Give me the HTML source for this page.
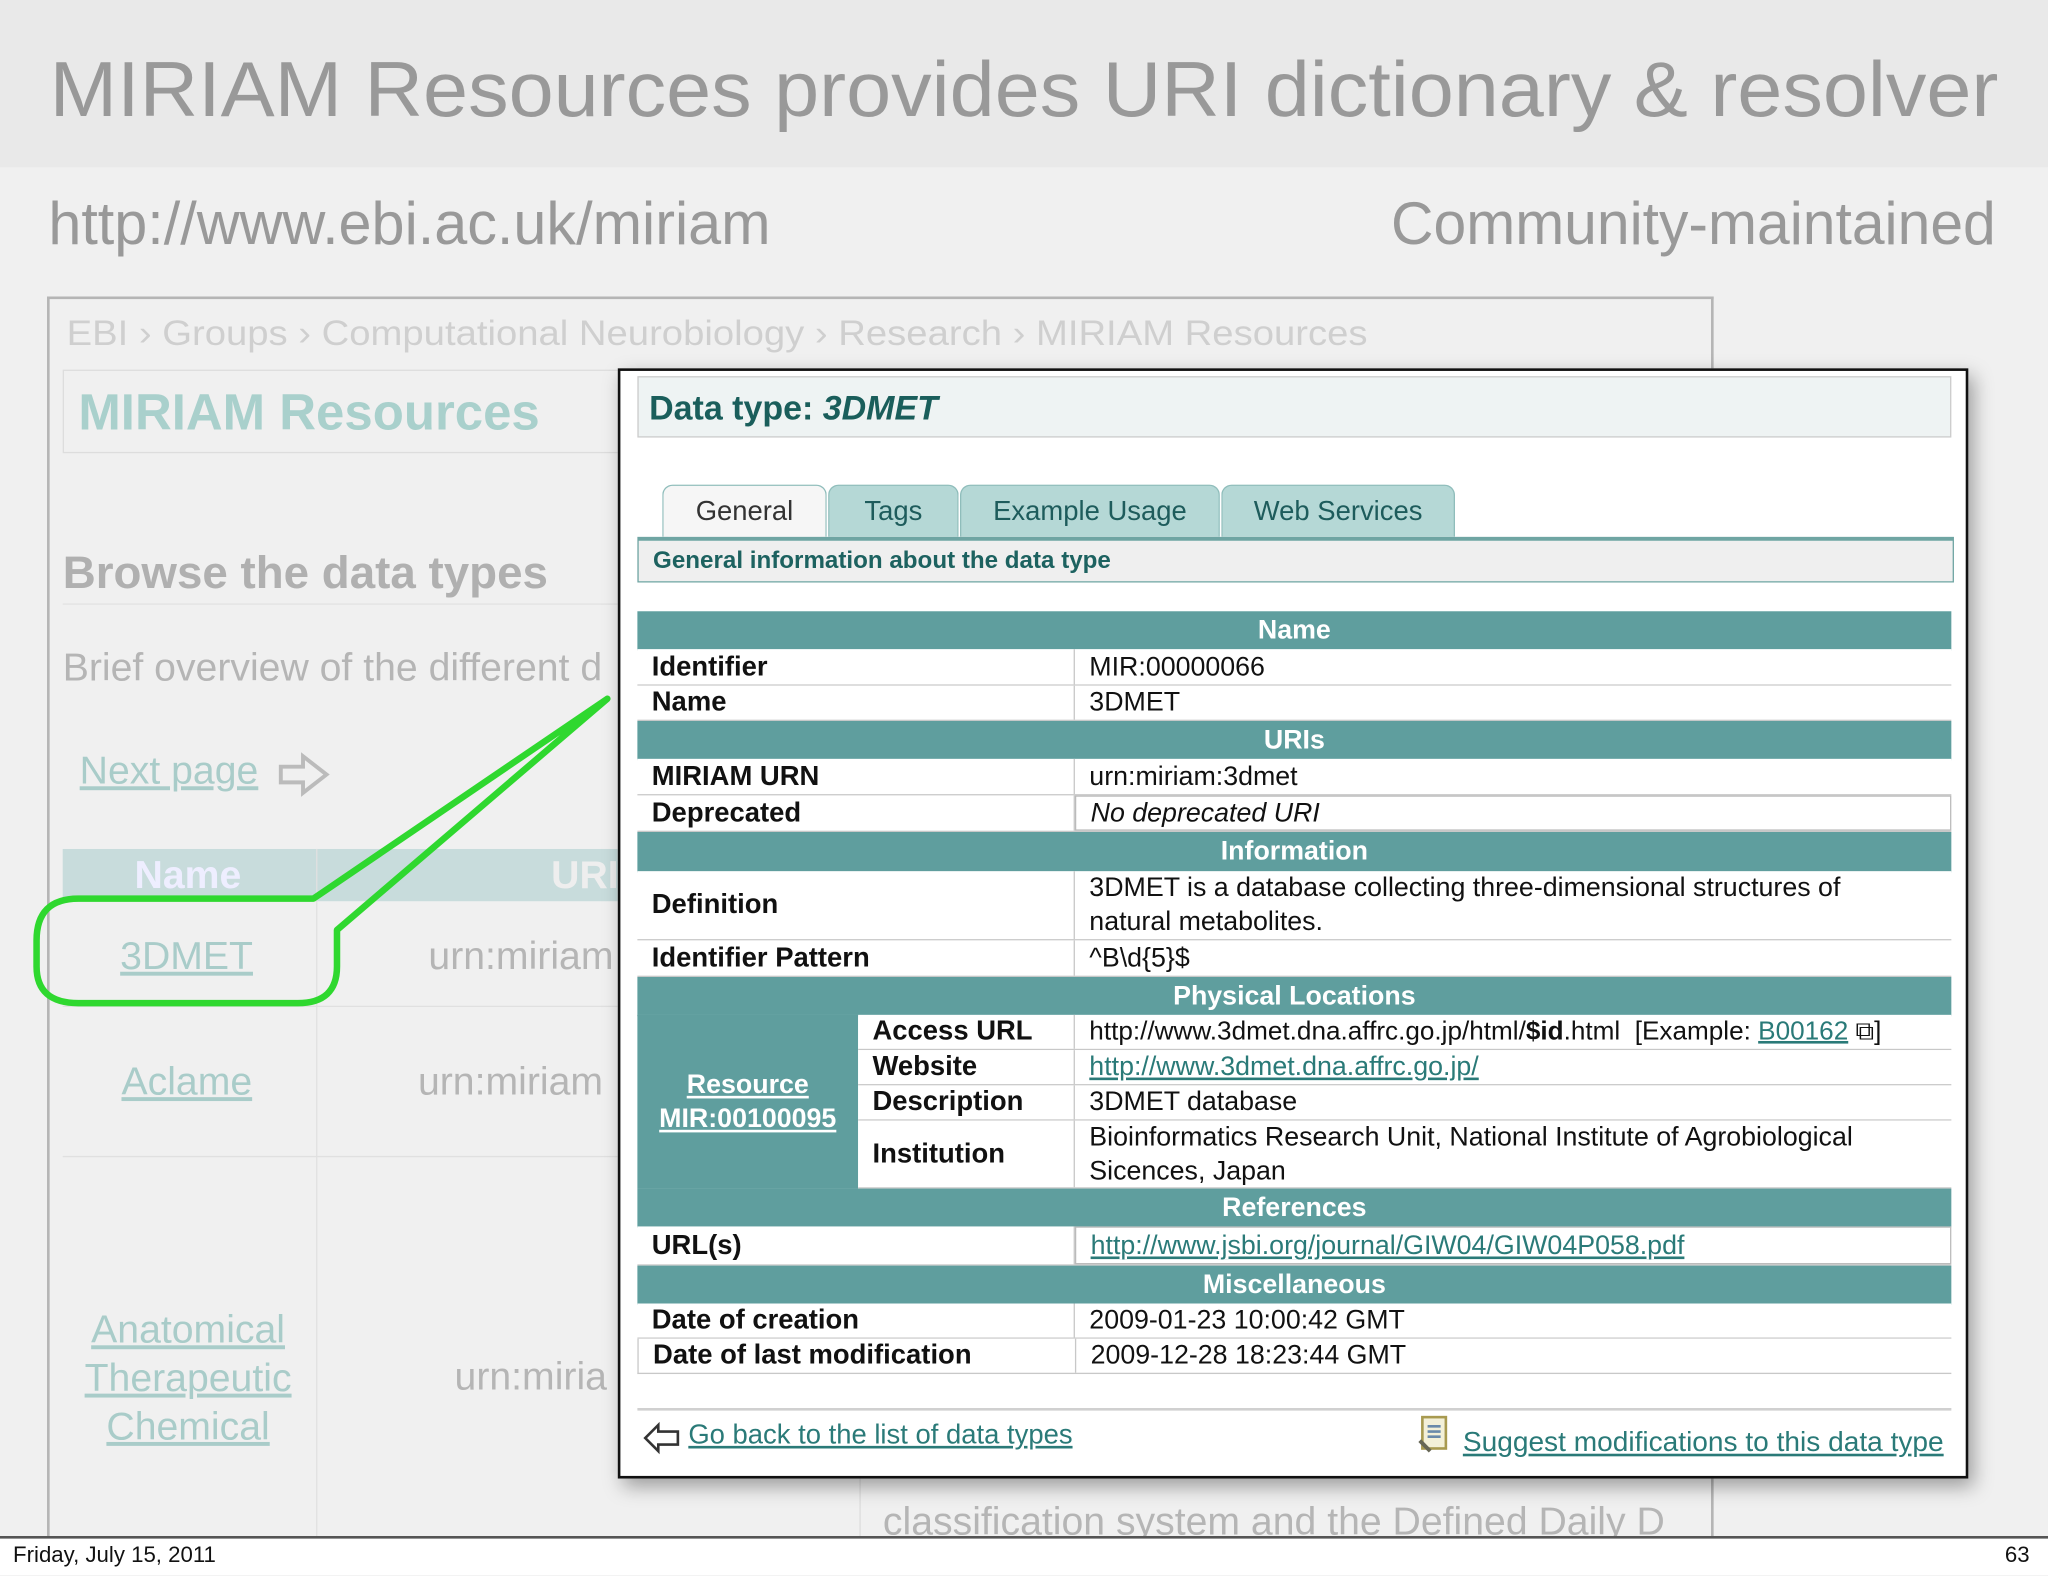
<!DOCTYPE html>
<html><head><meta charset="utf-8"><style>
html,body{margin:0;padding:0;background:#f0f0f0;overflow:hidden}
#root{position:relative;width:1568px;height:1206px;transform:scale(1.30612);transform-origin:0 0;font-family:"Liberation Sans",sans-serif;background:#f0f0f0}
.a{position:absolute;white-space:nowrap;line-height:1}
.row{position:absolute;left:488px;width:1006px;display:flex;box-sizing:border-box;border-bottom:1px solid #c8c8c8;background:#fff}
.hd{position:absolute;left:488px;width:1006px;background:#5f9e9e;color:#fff;font-weight:bold;font-size:20.5px;display:flex;align-items:center;justify-content:center;border-bottom:1px solid #8bbaba}
.lb{width:335px;border-right:1px solid #c8c8c8;padding-left:11px;font-weight:bold;font-size:21px;display:flex;align-items:center;box-sizing:border-box;color:#111}
.vl{flex:1;padding-left:11px;font-size:20.5px;display:flex;align-items:center;color:#111;line-height:26px}
.lk{color:#2a7a78;text-decoration:underline}
.tab{position:absolute;top:371px;height:40px;background:#b5d8d6;border:1px solid #8fbdbb;border-bottom:none;border-radius:8px 8px 0 0;box-sizing:border-box;color:#1e5c5c;font-size:21px;display:flex;align-items:center;justify-content:center}
</style></head><body><div id="root">
<div class="a" style="left:0;top:0;width:1568px;height:128px;background:#e9e9e9"></div>
<div class="a" style="left:36px;top:227px;width:1276px;height:950px;border:2px solid #b5b5b5;border-bottom:none;box-sizing:border-box"></div>
<svg class="a" style="left:0;top:0" width="1568" height="280">
<text x="38" y="89" font-family="Liberation Sans" font-size="60" fill="#999" textLength="1492" lengthAdjust="spacingAndGlyphs">MIRIAM Resources provides URI dictionary &amp; resolver</text>
<text x="37" y="187" font-family="Liberation Sans" font-size="46" fill="#999" textLength="553" lengthAdjust="spacingAndGlyphs">http://www.ebi.ac.uk/miriam</text>
<text x="1065" y="187" font-family="Liberation Sans" font-size="46" fill="#999" textLength="463" lengthAdjust="spacingAndGlyphs">Community-maintained</text>
<text x="51" y="264" font-family="Liberation Sans" font-size="27" fill="#cfcfcf" textLength="996" lengthAdjust="spacingAndGlyphs">EBI  ›  Groups  ›  Computational Neurobiology  ›  Research  ›  MIRIAM Resources</text>
</svg>
<div class="a" style="left:48px;top:283px;width:430px;height:64px;border:1px solid #ddd;box-sizing:border-box"></div>
<div class="a" style="left:60px;top:297px;font-size:39px;font-weight:bold;color:#a9d0cc">MIRIAM Resources</div>
<div class="a" style="left:48px;top:421px;font-size:35px;font-weight:bold;color:#b0b0b0">Browse the data types</div>
<div class="a" style="left:48px;top:462px;width:430px;height:1px;background:#e2e2e2"></div>
<div class="a" style="left:48px;top:497px;font-size:30px;color:#b5b5b5">Brief overview of the different d</div>
<div class="a" style="left:61px;top:576px;font-size:30px;color:#a9ccc9;text-decoration:underline">Next page </div>
<svg class="a" style="left:212px;top:575px" width="42" height="36"><path d="M3 12 H20 V4 L38 18 L20 32 V24 H3 Z" fill="none" stroke="#bbb" stroke-width="3"/></svg>
<div class="a" style="left:48px;top:650px;width:425px;height:40px;background:#c8dcdc"></div>
<div class="a" style="left:242px;top:650px;width:1px;height:527px;background:#e0e0e0"></div>
<div class="a" style="left:103px;top:656px;font-size:30px;font-weight:bold;color:#eef">Name</div>
<div class="a" style="left:422px;top:656px;font-size:30px;font-weight:bold;color:#eee">URI</div>
<div class="a" style="left:48px;top:770px;width:425px;height:1px;background:#e0e0e0"></div>
<div class="a" style="left:48px;top:885px;width:425px;height:1px;background:#e0e0e0"></div>
<div class="a" style="left:92px;top:718px;font-size:30px;color:#a9ccc9;text-decoration:underline">3DMET</div>
<div class="a" style="left:328px;top:718px;font-size:30px;color:#b5b5b5">urn:miriam</div>
<div class="a" style="left:93px;top:814px;font-size:30px;color:#a9ccc9;text-decoration:underline">Aclame</div>
<div class="a" style="left:320px;top:814px;font-size:30px;color:#b5b5b5">urn:miriam</div>
<div class="a" style="left:58px;top:1000px;width:172px;text-align:center;font-size:30px;line-height:37px;color:#a9ccc9;text-decoration:underline;white-space:normal">Anatomical Therapeutic Chemical</div>
<div class="a" style="left:348px;top:1040px;font-size:30px;color:#b5b5b5">urn:miria</div>
<div class="a" style="left:658px;top:1130px;width:1px;height:47px;background:#ddd"></div>
<div class="a" style="left:676px;top:1151px;font-size:30px;color:#b5b5b5">classification system and the Defined Daily D</div>
<svg class="a" style="left:0;top:0" width="1568" height="1206"><path d="M465 535 L240 688 L60 688 Q28 688 28 720 L28 740 Q28 768 60 768 L228 768 Q258 768 258 740 L258 712 Z" fill="none" stroke="#2fd82f" stroke-width="5" stroke-linejoin="round"/></svg>
<div class="a" style="left:473px;top:282px;width:1034px;height:850px;background:#fff;border:2px solid #111;box-sizing:border-box;box-shadow:4px 6px 14px rgba(0,0,0,.35)"></div>
<div class="a" style="left:488px;top:288px;width:1006px;height:47px;background:#eef3f3;border:1px solid #ccc;box-sizing:border-box"></div>
<div class="a" style="left:497px;top:299px;font-size:26px;font-weight:bold;color:#1a5e5b">Data type: <i>3DMET</i></div>
<div class="tab" style="left:507px;width:126px;background:#f6f6f6;color:#333">General</div>
<div class="tab" style="left:634px;width:100px">Tags</div>
<div class="tab" style="left:735px;width:199px">Example Usage</div>
<div class="tab" style="left:935px;width:179px">Web Services</div>
<div class="a" style="left:488px;top:411px;width:1008px;height:35px;background:#efefef;border:1px solid #6fa5a3;border-top:3px solid #6fa5a3;box-sizing:border-box"></div>
<div class="a" style="left:500px;top:420px;font-size:18.5px;font-weight:bold;color:#1d6260">General information about the data type</div>
<div class="hd" style="top:468px;height:29px">Name</div>
<div class="row" style="top:497px;height:28px"><div class="lb">Identifier</div><div class="vl">MIR:00000066</div></div>
<div class="row" style="top:525px;height:27px"><div class="lb">Name</div><div class="vl">3DMET</div></div>
<div class="hd" style="top:552px;height:29px">URIs</div>
<div class="row" style="top:581px;height:28px"><div class="lb">MIRIAM URN</div><div class="vl">urn:miriam:3dmet</div></div>
<div class="row" style="top:609px;height:28px"><div class="lb">Deprecated</div><div class="vl" style="font-style:italic;border:1px solid #bbb">No deprecated URI</div></div>
<div class="hd" style="top:637px;height:30px">Information</div>
<div class="row" style="top:667px;height:53px"><div class="lb">Definition</div><div class="vl" style="white-space:normal;padding-right:40px">3DMET is a database collecting three-dimensional structures of natural metabolites.</div></div>
<div class="row" style="top:720px;height:28px"><div class="lb">Identifier Pattern</div><div class="vl">^B\d{5}$</div></div>
<div class="hd" style="top:748px;height:29px">Physical Locations</div>
<div class="a" style="left:488px;top:777px;width:169px;height:133px;background:#5f9e9e;display:flex;flex-direction:column;align-items:center;justify-content:center;font-size:20.5px;font-weight:bold;color:#fff;line-height:26px"><span style="text-decoration:underline">Resource</span><span style="text-decoration:underline">MIR:00100095</span></div>
<div class="row" style="top:777px;left:657px;width:837px;height:27px"><div class="lb" style="width:166px">Access URL</div><div class="vl" style="font-size:20px">http://www.3dmet.dna.affrc.go.jp/html/<b>$id</b>.html &nbsp;[Example:&nbsp;<span class="lk">B00162</span>&nbsp;&#x29C9;]</div></div>
<div class="row" style="top:804px;left:657px;width:837px;height:27px"><div class="lb" style="width:166px">Website</div><div class="vl"><span class="lk">http://www.3dmet.dna.affrc.go.jp/</span></div></div>
<div class="row" style="top:831px;left:657px;width:837px;height:27px"><div class="lb" style="width:166px">Description</div><div class="vl">3DMET database</div></div>
<div class="row" style="top:858px;left:657px;width:837px;height:52px"><div class="lb" style="width:166px">Institution</div><div class="vl" style="white-space:normal">Bioinformatics Research Unit, National Institute of Agrobiological Sicences, Japan</div></div>
<div class="hd" style="top:910px;height:29px">References</div>
<div class="row" style="top:939px;height:30px"><div class="lb">URL(s)</div><div class="vl" style="border:1px solid #bbb"><span class="lk">http://www.jsbi.org/journal/GIW04/GIW04P058.pdf</span></div></div>
<div class="hd" style="top:969px;height:29px">Miscellaneous</div>
<div class="row" style="top:998px;height:27px"><div class="lb">Date of creation</div><div class="vl">2009-01-23 10:00:42 GMT</div></div>
<div class="row" style="top:1025px;height:27px;border-left:1px solid #c8c8c8"><div class="lb">Date of last modification</div><div class="vl">2009-12-28 18:23:44 GMT</div></div>
<div class="a" style="left:488px;top:1078px;width:1006px;height:2px;background:#d0d0d0"></div>
<svg class="a" style="left:492px;top:1088px" width="30" height="26"><path d="M2 13 L12 3 V8 H27 V18 H12 V23 Z" fill="#fff" stroke="#333" stroke-width="2"/></svg>
<div class="a" style="left:527px;top:1088px;font-size:21px;color:#2a7a78;text-decoration:underline">Go back to the list of data types</div>
<svg class="a" style="left:1085px;top:1083px" width="28" height="30"><rect x="4" y="2" width="18" height="24" fill="#f3f0d8" stroke="#a89a50" stroke-width="2"/><path d="M8 9h10M8 13h10M8 17h10" stroke="#6a8aaa" stroke-width="2"/><path d="M2 20 l8 8" stroke="#665" stroke-width="3"/></svg>
<div class="a" style="left:1120px;top:1094px;font-size:21.5px;color:#2a7a78;text-decoration:underline">Suggest modifications to this data type</div>
<div class="a" style="left:0;top:1176px;width:1568px;height:30px;background:#fff;border-top:2px solid #555;box-sizing:border-box"></div>
<div class="a" style="left:10px;top:1182px;font-size:17px;color:#111">Friday, July 15, 2011</div>
<div class="a" style="left:1535px;top:1182px;font-size:17px;color:#111">63</div>
</div></body></html>
